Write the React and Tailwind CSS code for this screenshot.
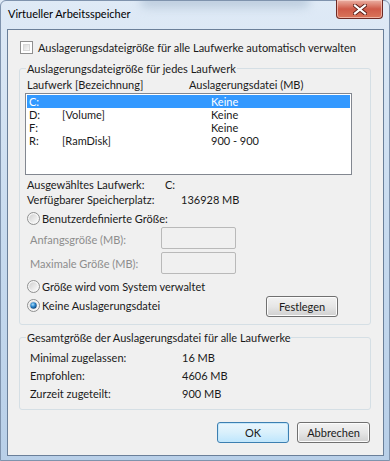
import React from "react";

function Checkbox() {
  return (
    <div className="w-[13px] h-[13px] border border-[#8f8f8f] bg-white p-[2px] shrink-0">
      <div className="w-full h-full border border-[#d8d8d8] bg-gradient-to-br from-[#dcdcdc] to-[#f8f8f8]" />
    </div>
  );
}

function Radio({ checked }) {
  return (
    <svg width="13" height="13" viewBox="0 0 13 13" className="shrink-0">
      <defs>
        <linearGradient id="rg" x1="0" y1="0" x2="1" y2="1">
          <stop offset="0" stopColor="#d0d0d0" />
          <stop offset="1" stopColor="#fbfbfb" />
        </linearGradient>
        <radialGradient id="rd" cx="0.4" cy="0.35" r="0.7">
          <stop offset="0" stopColor="#aee0fb" />
          <stop offset="0.5" stopColor="#2a86cd" />
          <stop offset="1" stopColor="#0e3d6e" />
        </radialGradient>
      </defs>
      <circle cx="6.5" cy="6.5" r="6" fill="#f6f6f6" stroke="#8e8f8f" strokeWidth="1" />
      <circle cx="6.5" cy="6.5" r="4.3" fill="url(#rg)" />
      {checked && <circle cx="6.5" cy="6.5" r="3.2" fill="url(#rd)" />}
    </svg>
  );
}

function Button({ children, def, w }) {
  return (
    <div
      className={
        "h-[21px] rounded-[3px] border flex items-center justify-center " +
        (def
          ? "border-[#3c7fb1] bg-gradient-to-b from-[#eaf6fd] via-[#d9f0fc] to-[#bee6fd] shadow-[inset_0_0_0_1px_#c5e7fa]"
          : "border-[#707070] bg-gradient-to-b from-[#f2f2f2] via-[#e6e6e6] to-[#d0d0d0] shadow-[inset_0_0_0_1px_#fcfcfc]")
      }
      style={{ width: w }}
    >
      <span className="leading-[15px]">{children}</span>
    </div>
  );
}

function Group({ label, className, children }) {
  return (
    <div className={"relative border border-[#d5dfe5] rounded-[3px] " + className}>
      <div className="absolute left-[6px] -top-[8px] px-[1px] bg-[#f0f0f0] leading-[15px]">{label}</div>
      {children}
    </div>
  );
}

export default function App() {
  const rows = [
    ["C:", "", "Keine", true],
    ["D:", "[Volume]", "Keine", false],
    ["F:", "", "Keine", false],
    ["R:", "[RamDisk]", "900 - 900", false],
  ];
  return (
    <div className="w-[390px] h-[461px] relative overflow-hidden bg-gradient-to-b from-[#dfeaf6] via-[#c8dbef] to-[#b8cfe8] font-['Lato',sans-serif] text-[11px] text-[#1a1a1a]">
      {/* blurred background glass */}
      <div className="absolute left-[140px] -top-[6px] w-[170px] h-[14px] rounded-full bg-[#9fb3c9] opacity-50 blur-[5px]" />
      <div className="absolute left-[0px] top-[0px] w-[390px] h-[461px] border border-[#7f93ad] rounded-t-[6px] pointer-events-none" />

      {/* title bar */}
      <div className="relative h-[29px] pl-[8px] pt-[6px] leading-[15px] text-black">Virtueller Arbeitsspeicher</div>

      {/* close button */}
      <div className="absolute top-0 left-[336px] w-[47px] h-[19px] rounded-b-[4px] border border-t-0 border-[#6e2a24] bg-gradient-to-b from-[#eab0a4] via-[#cf5a48] to-[#d9755a] shadow-[inset_0_0_0_1px_rgba(255,220,210,0.6)] flex items-center justify-center">
        <svg width="14" height="11" viewBox="0 0 14 11">
          <path d="M2 1.5 L12 9.5 M12 1.5 L2 9.5" stroke="#5a1d16" strokeWidth="4" strokeLinecap="square" />
          <path d="M2 1.5 L12 9.5 M12 1.5 L2 9.5" stroke="#ffffff" strokeWidth="2.2" strokeLinecap="square" />
        </svg>
      </div>

      {/* content */}
      <div className="relative ml-[7px] w-[377px] h-[427px] border border-[#6a7f99] bg-[#f0f0f0] flex flex-col">
        <div className="flex items-center mt-[11px] ml-[12px] h-[13px] gap-[5px]">
          <Checkbox />
          <span className="leading-[15px] whitespace-nowrap">Auslagerungsdateigröße für alle Laufwerke automatisch verwalten</span>
        </div>

        <Group label="Auslagerungsdateigröße für jedes Laufwerk" className="mt-[14px] ml-[11px] w-[352px] h-[257px]">
          <div className="flex pt-[8px] pl-[7px] leading-[15px]">
            <span className="w-[162px]">Laufwerk [Bezeichnung]</span>
            <span>Auslagerungsdatei (MB)</span>
          </div>
          <div className="mt-[1px] ml-[5px] w-[327px] h-[82px] border border-[#828790] bg-white pt-[1px] px-[1px]">
            {rows.map(([d, n, v, sel]) => (
              <div
                key={d}
                className={"flex h-[13px] items-center pl-[2px] leading-[13px] " + (sel ? "bg-[#3399ff] text-white" : "")}
              >
                <span className="w-[33px]">{d}</span>
                <span className="w-[149px]">{n}</span>
                <span>{v}</span>
              </div>
            ))}
          </div>
          <div className="mt-[2px] pl-[7px] leading-[15px]">
            <div className="flex">
              <span className="w-[138px]">Ausgewähltes Laufwerk:</span>
              <span>C:</span>
            </div>
            <div className="flex">
              <span className="w-[154px]">Verfügbarer Speicherplatz:</span>
              <span>136928 MB</span>
            </div>
          </div>
          <div className="flex items-center mt-[4px] ml-[7px] h-[15px] gap-[2px]">
            <Radio />
            <span className="leading-[15px]">Benutzerdefinierte Größe:</span>
          </div>
          <div className="flex mt-[1px] ml-[10px]">
            <span className="w-[131px] mt-[5px] leading-[15px] text-[#8d8d8d]">Anfangsgröße (MB):</span>
            <div className="w-[75px] h-[22px] border border-[#b9b9b9] rounded-[2px] bg-[#f0f0f0]" />
          </div>
          <div className="flex mt-[3px] ml-[10px]">
            <span className="w-[131px] mt-[4px] leading-[15px] text-[#8d8d8d]">Maximale Größe (MB):</span>
            <div className="w-[75px] h-[22px] border border-[#b9b9b9] rounded-[2px] bg-[#f0f0f0]" />
          </div>
          <div className="flex items-center mt-[5px] ml-[7px] h-[15px] gap-[2px]">
            <Radio />
            <span className="leading-[15px]">Größe wird vom System verwaltet</span>
          </div>
          <div className="flex items-start mt-[3px] ml-[7px]">
            <div className="flex items-center h-[15px] gap-[2px] mt-[1px]">
              <Radio checked />
              <span className="leading-[15px]">Keine Auslagerungsdatei</span>
            </div>
            <div className="ml-auto mr-[32px] mt-[-1px]">
              <Button w={72}>Festlegen</Button>
            </div>
          </div>
        </Group>

        <Group label="Gesamtgröße der Auslagerungsdatei für alle Laufwerke" className="mt-[12px] ml-[11px] w-[352px] h-[73px]">
          <div className="pt-[11px] pl-[10px] leading-[18px]">
            <div className="flex">
              <span className="w-[152px]">Minimal zugelassen:</span>
              <span>16 MB</span>
            </div>
            <div className="flex">
              <span className="w-[152px]">Empfohlen:</span>
              <span>4606 MB</span>
            </div>
            <div className="flex">
              <span className="w-[152px]">Zurzeit zugeteilt:</span>
              <span>900 MB</span>
            </div>
          </div>
        </Group>

        <div className="flex justify-end gap-[8px] mt-[12px] mr-[13px]">
          <Button def w={72}>OK</Button>
          <Button w={73}>Abbrechen</Button>
        </div>
      </div>
    </div>
  );
}
